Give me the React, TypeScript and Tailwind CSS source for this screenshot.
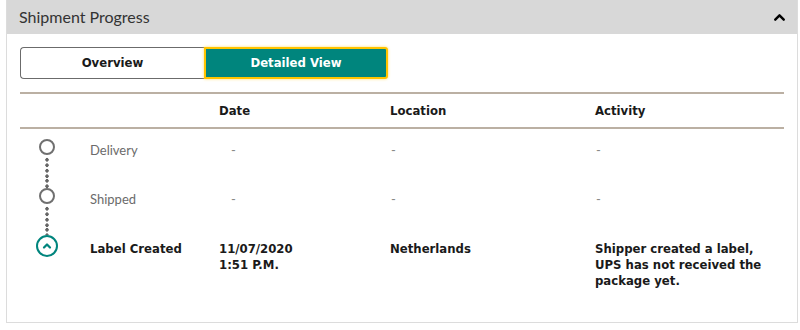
import { ChevronUp } from "lucide-react";

const rows = [
  { status: "Delivery", date: ["-"], location: "-", activity: ["-"], done: false },
  { status: "Shipped", date: ["-"], location: "-", activity: ["-"], done: false },
  {
    status: "Label Created",
    date: ["11/07/2020", "1:51 P.M."],
    location: "Netherlands",
    activity: ["Shipper created a label,", "UPS has not received the", "package yet."],
    done: true,
  },
];

const bold = "font-['DejaVu_Sans',sans-serif] font-bold font-stretch-condensed";
const dots = "w-[4px] bg-[radial-gradient(circle,#666_1.5px,transparent_1.9px)] bg-[length:4px_5.5px] bg-repeat-y";

export default function App() {
  return (
    <div className="w-[800px] h-[330px] bg-white pl-[6px] font-['Lato',sans-serif] text-[#333]">
      <div className="w-[792px] h-[323px] border-x border-b border-[#dcdcdc]">
        <div className="h-[34px] bg-[#d8d8d8] flex items-center justify-between pl-[12px] pr-[9px]">
          <span className="text-[16px] text-[#333] leading-none">Shipment Progress</span>
          <ChevronUp className="w-[17px] h-[17px] text-black" strokeWidth={3.4} />
        </div>

        <div className="px-[13px] pt-[13px]">
          <div className="flex">
            <button className={`w-[184px] h-[32px] border border-[#6b6b6b] border-r-0 rounded-l-[4px] bg-white text-[13px] text-[#1a1a1a] ${bold}`}>
              Overview
            </button>
            <button className={`w-[184px] h-[32px] border-2 border-[#ffc400] rounded-r-[3px] bg-[#00857d] text-[13px] text-white shadow-[0_0_3px_#ffd966] ${bold}`}>
              Detailed View
            </button>
          </div>

          <div className="mt-[13px] w-[764px] border-t-2 border-[#bbb0a3]">
            <div className={`h-[35px] grid grid-cols-[70px_129px_171px_205px_189px] items-center text-[13px] text-[#1a1a1a] border-b-2 border-[#bbb0a3] ${bold}`}>
              <span />
              <span />
              <span>Date</span>
              <span>Location</span>
              <span>Activity</span>
            </div>

            {rows.map((r, i) => (
              <div
                key={r.status}
                className="grid grid-cols-[70px_129px_171px_205px_189px] h-[49px] text-[13px] leading-[16px]"
              >
                <div className="flex flex-col items-center w-[54px]">
                  <div className={`${r.done ? "h-[8px]" : "h-[10px]"} ${i > 0 ? dots : ""}`} />
                  {r.done ? (
                    <div className="w-[22px] h-[22px] rounded-full border-2 border-[#00857d] flex items-center justify-center">
                      <ChevronUp className="w-[12px] h-[12px] text-[#00857d]" strokeWidth={4.5} />
                    </div>
                  ) : (
                    <div className="w-[16px] h-[16px] rounded-full border-2 border-[#707070] bg-white" />
                  )}
                  {i < rows.length - 1 && <div className={`flex-1 mt-[2px] ${dots}`} />}
                </div>
                {r.done ? (
                  <>
                    <div className={`pt-[14px] text-[#1a1a1a] ${bold}`}>{r.status}</div>
                    <div className={`pt-[14px] text-[#1a1a1a] ${bold}`}>
                      {r.date.map((d) => (
                        <div key={d}>{d}</div>
                      ))}
                    </div>
                    <div className={`pt-[14px] text-[#1a1a1a] ${bold}`}>{r.location}</div>
                    <div className={`pt-[14px] text-[#1a1a1a] ${bold}`}>
                      {r.activity.map((a) => (
                        <div key={a}>{a}</div>
                      ))}
                    </div>
                  </>
                ) : (
                  <>
                    <div className="pt-[13px] text-[#6b6b6b]">{r.status}</div>
                    <div className="pt-[13px] pl-[12px] text-[#888]">-</div>
                    <div className="pt-[13px] pl-[1px] text-[#888]">-</div>
                    <div className="pt-[13px] pl-[1px] text-[#888]">-</div>
                  </>
                )}
              </div>
            ))}
          </div>
        </div>
      </div>
    </div>
  );
}
